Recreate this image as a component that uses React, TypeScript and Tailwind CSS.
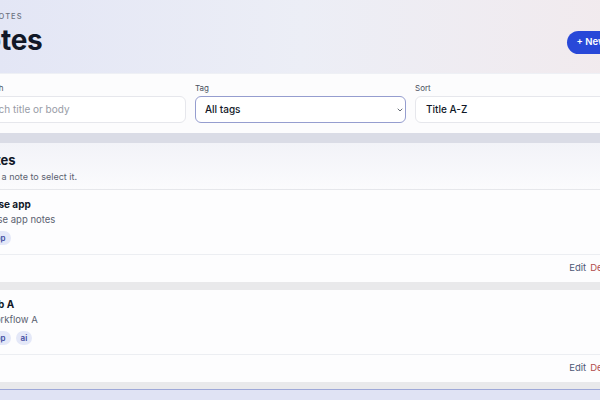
import React from "react";

function Chip({ label }: { label: string }) {
  return (
    <span className="inline-flex h-[14px] items-center rounded-full bg-[#e4e8f8] px-[5px] text-[8px] font-semibold leading-none text-[#3f4ba0]">
      {label}
    </span>
  );
}

function NoteItem({ title, body, tags }: { title: string; body: string; tags: string[] }) {
  return (
    <li className="bg-[#fdfdfe]">
      <div className="pl-[26px] pt-[8px] pb-[9px]">
        <div className="text-[10px] font-bold leading-[13px] text-[#111827]">{title}</div>
        <div className="mt-[3px] text-[9.5px] leading-[12px] text-[#5b6170]">{body}</div>
        <div className="mt-[5px] flex gap-[5px]">
          {tags.map((t) => (
            <Chip key={t} label={t} />
          ))}
        </div>
      </div>
      <div className="flex h-[28px] items-center justify-end gap-[4px] border-t border-[#eceef2] pr-[21px] text-[9.5px]">
        <span className="text-[#4d5875]">Edit</span>
        <span className="text-[#b14d4d]">Delete</span>
      </div>
    </li>
  );
}

export default function App() {
  return (
    <div className="h-[400px] w-[600px] overflow-hidden bg-[#dadce6] font-['Inter',sans-serif]">
      <div className="ml-[-40px] w-[680px]">
        {/* Header */}
        <div className="flex h-[73px] justify-between bg-gradient-to-r from-[#e2e5f5] via-[#eceef6] to-[#f2eaed] pl-[3px] pr-[24px]">
          <div className="pt-[12px]">
            <div className="text-[7.5px] font-medium uppercase leading-[10px] tracking-[0.14em] text-[#6b7280]">
              Team Notes
            </div>
            <div className="mt-[4px] text-[28px] font-bold leading-[28px] tracking-[-0.01em] text-[#111827]">
              Notes
            </div>
          </div>
          <div className="pt-[31px]">
            <div className="flex h-[23px] items-center rounded-full bg-[#2848d8] px-[10px] text-[9.5px] font-semibold text-white">
              + New
            </div>
          </div>
        </div>

        {/* Filters */}
        <div className="h-[60px] border-t border-[#eef0f5] bg-[#fcfcfd] pl-[6px] pt-[8px]">
          <div className="grid grid-cols-[220px_211px_211px] gap-x-[9px]">
            <div>
              <div className="pl-[11px] text-[8px] leading-[12px] text-[#4b5260]">Search</div>
              <div className="mt-[2px] flex h-[27px] items-center rounded-[6px] border border-[#e6e7ec] bg-white px-[10px] text-[10px] text-[#989ca6]">
                Search title or body
              </div>
            </div>
            <div>
              <div className="text-[8px] leading-[12px] text-[#4b5260]">Tag</div>
              <div className="mt-[2px] flex h-[27px] items-center justify-between rounded-[6px] border-[1.5px] border-[#959dcf] bg-white pl-[9px] pr-[2px] text-[10px] font-medium text-[#111827]">
                <span>All tags</span>
                <svg width="6" height="6" viewBox="0 0 6 6" fill="none">
                  <path d="M1 2l2 2 2-2" stroke="#555b66" strokeWidth="0.9" strokeLinecap="round" strokeLinejoin="round" />
                </svg>
              </div>
            </div>
            <div>
              <div className="text-[8px] leading-[12px] text-[#4b5260]">Sort</div>
              <div className="mt-[2px] flex h-[27px] items-center rounded-[6px] border border-[#e6e7ec] bg-white px-[10px] text-[10px] font-medium text-[#111827]">
                Title A-Z
              </div>
            </div>
          </div>
        </div>

        <div className="h-[10px]" />

        {/* List card */}
        <div className="bg-[#e9e9eb]">
          <div className="h-[47px] border-b border-[#e6e7eb] bg-gradient-to-b from-[#f2f3f8] to-[#fbfbfd] pl-[18px] pt-[9px]">
            <div className="text-[13px] font-bold leading-[17px] text-[#111827]">Notes</div>
            <div className="mt-[2px] text-[9px] leading-[12px] text-[#5b6170]">Click a note to select it.</div>
          </div>
          <ul className="flex flex-col gap-[8px] pb-[7px]">
            <NoteItem title="Base app" body="Base app notes" tags={["app"]} />
            <NoteItem title="Job A" body="Workflow A" tags={["app", "ai"]} />
          </ul>
        </div>
        <div className="h-[20px] border-t border-[#9ea8d8] bg-[#e0e3f4]" />
      </div>
    </div>
  );
}
